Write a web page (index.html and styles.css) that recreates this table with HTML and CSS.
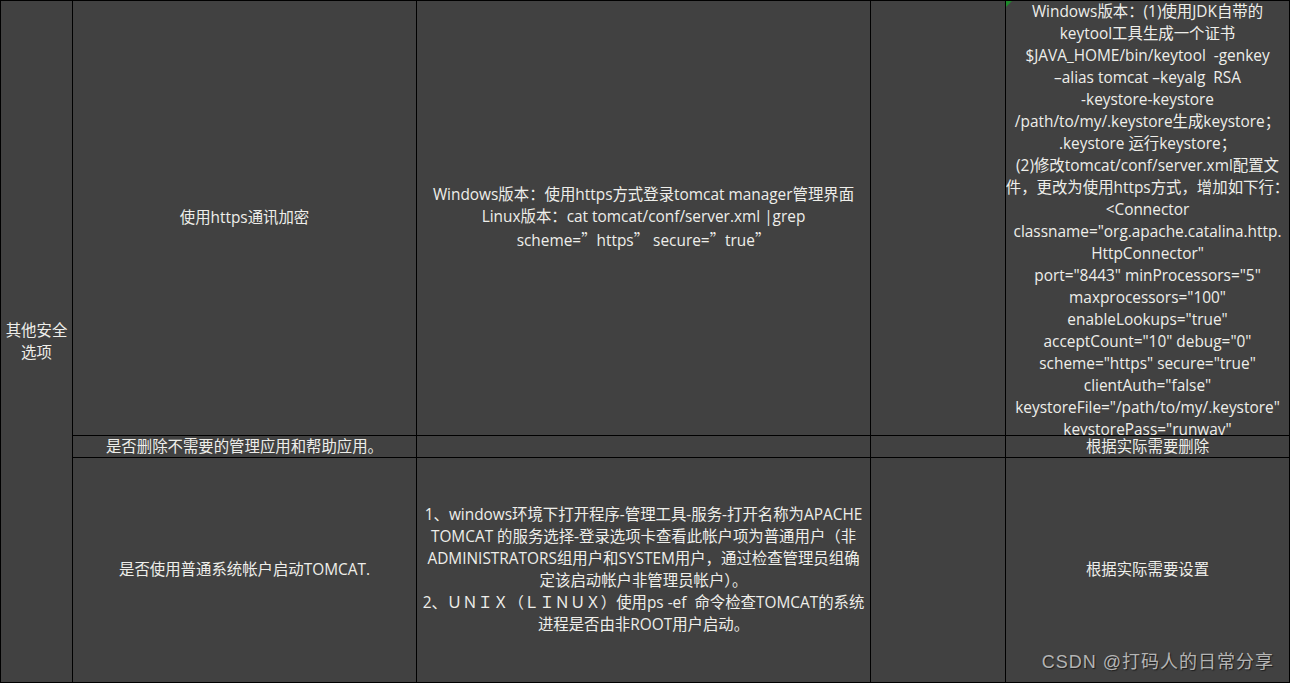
FILE: index.html
```html
<!DOCTYPE html>
<html lang="zh-CN">
<head>
<meta charset="utf-8">
<title>其他安全选项</title>
<link rel="stylesheet" href="styles.css">
</head>
<body>
<div class="sheet">
  <div class="cell group">其他安全<br>选项</div>

  <div class="cell">使用https通讯加密</div>
  <div class="cell">
    <div class="lines">
      <span>Windows版本：使用https方式登录tomcat manager管理界面</span>
      <span>Linux版本：cat tomcat/conf/server.xml |grep</span>
      <span>scheme=<b class="cjk">”</b>https<b class="cjk">”</b> secure=<b class="cjk">”</b>true<b class="cjk">”</b></span>
    </div>
  </div>
  <div class="cell"></div>
  <div class="cell top">
    <i class="flag"></i>
    <div class="lines">
      <span>Windows版本：(1)使用JDK自带的</span>
      <span>keytool工具生成一个证书</span>
      <span>$JAVA_HOME/bin/keytool &nbsp;-genkey</span>
      <span>–alias tomcat –keyalg &nbsp;RSA</span>
      <span>-keystore-keystore</span>
      <span>/path/to/my/.keystore生成keystore；</span>
      <span>.keystore 运行keystore；</span>
      <span>(2)修改tomcat/conf/server.xml配置文</span>
      <span>件，更改为使用https方式，增加如下行：</span>
      <span>&lt;Connector</span>
      <span>classname="org.apache.catalina.http.</span>
      <span>HttpConnector"</span>
      <span>port="8443" minProcessors="5"</span>
      <span>maxprocessors="100"</span>
      <span>enableLookups="true"</span>
      <span>acceptCount="10" debug="0"</span>
      <span>scheme="https" secure="true"</span>
      <span>clientAuth="false"</span>
      <span>keystoreFile="/path/to/my/.keystore"</span>
      <span>keystorePass="runway"</span>
    </div>
  </div>

  <div class="cell">是否删除不需要的管理应用和帮助应用。</div>
  <div class="cell"></div>
  <div class="cell"></div>
  <div class="cell">根据实际需要删除</div>

  <div class="cell">是否使用普通系统帐户启动TOMCAT.</div>
  <div class="cell">
    <div class="lines">
      <span>1、windows环境下打开程序-管理工具-服务-打开名称为APACHE</span>
      <span>TOMCAT 的服务选择-登录选项卡查看此帐户项为普通用户（非</span>
      <span>ADMINISTRATORS组用户和SYSTEM用户，通过检查管理员组确</span>
      <span>定该启动帐户非管理员帐户）。</span>
      <span>2、ＵＮＩＸ（ＬＩＮＵＸ）使用ps -ef &nbsp;命令检查TOMCAT的系统</span>
      <span>进程是否由非ROOT用户启动。</span>
    </div>
  </div>
  <div class="cell"></div>
  <div class="cell">根据实际需要设置</div>
</div>
<div class="watermark">CSDN @打码人的日常分享</div>
</body>
</html>
```

FILE: styles.css
```css
html, body {
  margin: 0;
  padding: 0;
  background: #414141;
}

body {
  width: 1290px;
  height: 683px;
  overflow: hidden;
  position: relative;
  font-family: "Open Sans", "Noto Sans CJK SC", sans-serif;
  font-size: 15.4px;
  line-height: 22px;
  color: #eeeeea;
}

.sheet {
  display: grid;
  grid-template-columns: 71px 343px 453px 134px 283px;
  grid-template-rows: 434px 21px 224px;
  gap: 1px;
  padding: 1px;
  background: #000;
  width: 1290px;
  height: 683px;
  box-sizing: border-box;
}

.cell {
  background: #414141;
  display: flex;
  align-items: center;
  justify-content: center;
  text-align: center;
  overflow: hidden;
  position: relative;
  white-space: nowrap;
}

.group {
  grid-row: 1 / 4;
  white-space: normal;
}

.top {
  align-items: flex-start;
}

.lines {
  display: flex;
  flex-direction: column;
  align-items: center;
}

.lines span {
  display: block;
  white-space: pre;
}

.cjk {
  font-family: "Noto Sans CJK SC", sans-serif;
  font-weight: normal;
}

.flag {
  position: absolute;
  left: 0;
  top: 0;
  width: 0;
  height: 0;
  border-top: 6px solid #1d8a2a;
  border-right: 6px solid transparent;
}

.watermark {
  position: absolute;
  right: 16px;
  bottom: 10px;
  font-family: "Liberation Sans", "Noto Sans CJK SC", sans-serif;
  font-size: 18px;
  letter-spacing: 1px;
  line-height: 22px;
  color: #b4b4b4;
  text-shadow: 1px 1px 1px #1e1e1e;
}
```
